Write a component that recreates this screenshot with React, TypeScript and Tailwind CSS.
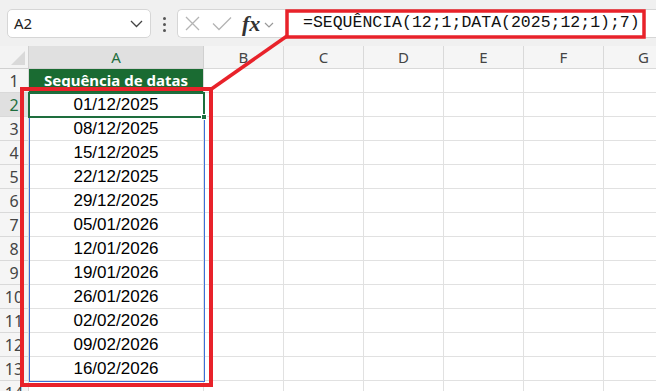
import React from "react";

const dates = [
  "01/12/2025",
  "08/12/2025",
  "15/12/2025",
  "22/12/2025",
  "29/12/2025",
  "05/01/2026",
  "12/01/2026",
  "19/01/2026",
  "26/01/2026",
  "02/02/2026",
  "09/02/2026",
  "16/02/2026",
];

const otherCols = ["B", "C", "D", "E", "F", "G"];

function Toolbar() {
  return (
    <div className="flex h-[46px] items-start bg-[#f0f0f0] pt-[9px]">
      {/* Name box */}
      <div className="ml-[7px] flex h-[29px] w-[144px] items-center justify-between rounded-[5px] border border-[#d6d6d6] bg-white pl-[6px] pr-[7px]">
        <span className="text-[15px] text-[#222]">A2</span>
        <svg width="13" height="8" viewBox="0 0 13 8">
          <polyline points="1,1 6.5,6.5 12,1" fill="none" stroke="#444" strokeWidth="1.3" />
        </svg>
      </div>

      {/* dots */}
      <div className="ml-[11px] mt-[8px] flex w-[5px] flex-col items-center gap-[3px]">
        <span className="h-[3px] w-[3px] rounded-full bg-[#555]" />
        <span className="h-[3px] w-[3px] rounded-full bg-[#555]" />
        <span className="h-[3px] w-[3px] rounded-full bg-[#555]" />
      </div>

      {/* formula buttons */}
      <div className="ml-[10px] flex h-[29px] w-[106px] items-center rounded-l-[5px] border border-r-0 border-[#d6d6d6] bg-white pl-[7px]">
        <svg width="15" height="15" viewBox="0 0 15 15">
          <path d="M1 1 L14 14 M14 1 L1 14" stroke="#b4b4b4" strokeWidth="1.3" fill="none" />
        </svg>
        <svg className="ml-[12px]" width="20" height="15" viewBox="0 0 20 15">
          <polyline points="1,7.5 7,13.5 19,1.5" stroke="#b4b4b4" strokeWidth="1.3" fill="none" />
        </svg>
        <span className="ml-[10px] font-['Liberation_Serif'] text-[22px] font-semibold italic leading-none text-[#333]">
          fx
        </span>
        <svg className="ml-[4px] mt-[2px]" width="10" height="6" viewBox="0 0 10 6">
          <polyline points="1,1 5,5 9,1" fill="none" stroke="#999" strokeWidth="1.2" />
        </svg>
      </div>

      {/* formula bar */}
      <div className="flex h-[29px] flex-1 items-center border-y border-[#d6d6d6] bg-white pl-[20px]">
        <span className="font-['Liberation_Mono'] text-[16.5px] leading-none text-[#111]">
          =SEQUÊNCIA(12;1;DATA(2025;12;1);7)
        </span>
      </div>
    </div>
  );
}

function Grid() {
  const rows = Array.from({ length: 14 }, (_, i) => i + 1);
  return (
    <div className="grid grid-cols-[29px_175px_80px_80px_80px_80px_80px_80px] grid-rows-[23px_repeat(14,24px)]">
      {/* corner */}
      <div className="relative border-b border-r border-[#d0d0d0] bg-[#f3f3f3]">
        <svg className="absolute bottom-[3px] right-[3px]" width="14" height="14" viewBox="0 0 14 14">
          <polygon points="14,0 14,14 0,14" fill="#d9d9d9" />
        </svg>
      </div>
      <div className="flex items-center justify-center border-b border-r border-[#d0d0d0] bg-[#e0e0e0] text-[15px] text-[#1e6e3e]">
        A
      </div>
      {otherCols.map((c) => (
        <div
          key={c}
          className="flex items-center justify-center border-b border-r border-[#d9d9d9] bg-[#f5f5f5] text-[15px] text-[#444]"
        >
          {c}
        </div>
      ))}

      {rows.map((r) => (
        <React.Fragment key={r}>
          <div
            className={`flex items-center justify-center border-b border-r border-[#d9d9d9] text-[16px] ${
              r === 2 ? "bg-[#e0e0e0] text-[#1e6e3e]" : "bg-[#f5f5f5] text-[#444]"
            }`}
          >
            {r}
          </div>
          {r === 1 ? (
            <div className="flex items-center justify-center border-b border-r border-[#d9d9d9] bg-[#1a6b32] font-['Noto_Sans'] text-[15px] font-bold text-white">
              Sequência de datas
            </div>
          ) : (
            <div className="flex items-center justify-center border-b border-r border-[#e1e1e1] pt-[1px] font-['Liberation_Sans'] text-[17px] text-black">
              {dates[r - 2] ?? ""}
            </div>
          )}
          {otherCols.map((c) => (
            <div key={c} className="border-b border-r border-[#e1e1e1]" />
          ))}
        </React.Fragment>
      ))}
    </div>
  );
}

export default function App() {
  return (
    <div className="relative h-[391px] w-[656px] overflow-hidden bg-white font-['Noto_Sans',sans-serif]">
      <div className="h-[4px] bg-[#e9e9ec]" />
      <div className="-mt-[4px]">
        <Toolbar />
      </div>
      <Grid />

      {/* spill range border */}
      <div className="pointer-events-none absolute left-[29px] top-[92px] h-[290px] w-[176px] border border-[#3a6fd8]" />
      {/* active cell */}
      <div className="pointer-events-none absolute left-[28px] top-[92px] h-[26px] w-[177px] border-2 border-[#1e6e3e]" />
      <div className="pointer-events-none absolute left-[201px] top-[114px] h-[6px] w-[6px] border border-white bg-[#1e6e3e]" />

      {/* red annotations */}
      <svg className="pointer-events-none absolute left-0 top-0" width="656" height="391" viewBox="0 0 656 391">
        <rect x="287" y="11" width="357" height="26" fill="none" stroke="#e8222a" strokeWidth="3.5" />
        <rect x="22" y="89" width="189" height="296" fill="none" stroke="#e8222a" strokeWidth="4" />
        <line x1="287" y1="36" x2="210" y2="90" stroke="#e8222a" strokeWidth="3.5" />
      </svg>
    </div>
  );
}
